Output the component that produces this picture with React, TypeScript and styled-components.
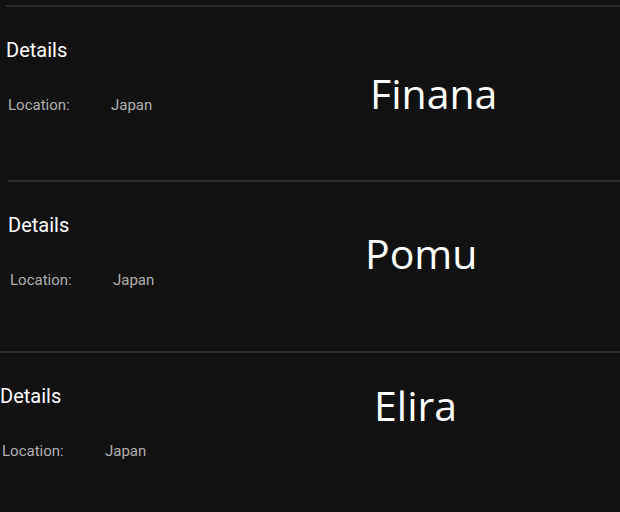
import React from "react";
import styled, { createGlobalStyle } from "styled-components";

const Global = createGlobalStyle`
  html, body {
    margin: 0;
    padding: 0;
    background: #111111;
  }
  body {
    width: 620px;
    height: 512px;
    overflow: hidden;
  }
`;

const List = styled.div`
  display: flex;
  flex-direction: column;
  padding-top: 5px;
`;

const Card = styled.section<{ $shift: number; $height: number }>`
  display: flex;
  margin-left: ${(p) => p.$shift}px;
  height: ${(p) => p.$height}px;
  border-top: 2px solid #2a2a2a;
  box-sizing: border-box;
`;

const Info = styled.div`
  display: flex;
  flex-direction: column;
  width: 340px;
  flex: none;
`;

const Title = styled.h2`
  margin: 31px 0 0 0;
  font-family: Roboto, "Liberation Sans", sans-serif;
  font-weight: 400;
  font-size: 20px;
  line-height: 24px;
  color: #ffffff;
`;

const Row = styled.div`
  display: flex;
  margin-top: 34px;
  padding-left: 2px;
  font-family: Roboto, "Liberation Sans", sans-serif;
  font-size: 15px;
  line-height: 18px;
  color: #b0b0b0;
`;

const Label = styled.span`
  width: 103px;
  flex: none;
`;

const Value = styled.span``;

const Name = styled.div<{ $x: number; $y: number }>`
  margin-left: ${(p) => p.$x}px;
  margin-top: ${(p) => p.$y}px;
  font-family: "Open Sans", "Noto Sans", sans-serif;
  font-size: 41px;
  line-height: 54px;
  color: #ffffff;
  white-space: nowrap;
`;

const people = [
  { name: "Finana", shift: 6, height: 175, x: 24, y: 59 },
  { name: "Pomu", shift: 8, height: 171, x: 17, y: 44 },
  { name: "Elira", shift: 0, height: 170, x: 34, y: 25 },
];

export default function App() {
  return (
    <>
      <Global />
      <List>
        {people.map((p) => (
          <Card key={p.name} $shift={p.shift} $height={p.height}>
            <Info>
              <Title>Details</Title>
              <Row>
                <Label>Location:</Label>
                <Value>Japan</Value>
              </Row>
            </Info>
            <Name $x={p.x} $y={p.y}>
              {p.name}
            </Name>
          </Card>
        ))}
      </List>
    </>
  );
}
